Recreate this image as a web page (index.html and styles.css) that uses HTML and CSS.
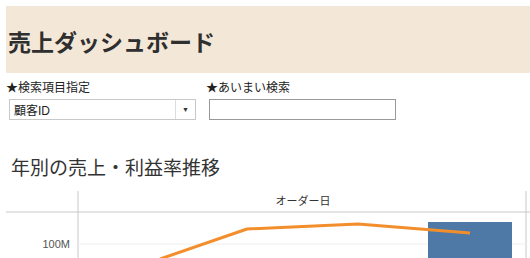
FILE: index.html
```html
<!DOCTYPE html>
<html lang="ja">
<head>
  <meta charset="UTF-8" />
  <title>売上ダッシュボード</title>
  <link rel="stylesheet" href="styles.css">
</head>
<body>
  <header class="banner">
    <h1>売上ダッシュボード</h1>
  </header>

  <div class="filters">
    <div class="filter">
      <label>★検索項目指定</label>
      <div class="select">
        <span class="select-value">顧客ID</span>
        <span class="select-arrow">▼</span>
      </div>
    </div>
    <div class="filter">
      <label>★あいまい検索</label>
      <div class="textbox"></div>
    </div>
  </div>

  <h2 class="section-title">年別の売上・利益率推移</h2>

  <div class="chart">
    <svg width="524" height="68" viewBox="0 0 524 68">
      <line x1="72" y1="0" x2="72" y2="68" stroke="#c8c8c8" />
      <line x1="520" y1="0" x2="520" y2="68" stroke="#c8c8c8" />
      <line x1="0" y1="21" x2="524" y2="21" stroke="#c8c8c8" />
      <line x1="72" y1="53" x2="520" y2="53" stroke="#efefef" />
      <text x="297" y="14" class="axis-title" text-anchor="middle">オーダー日</text>
      <text x="64" y="57" class="axis-label" text-anchor="end">100M</text>
      <rect x="422" y="31" width="84" height="40" fill="#4e79a7" />
      <polyline points="154,68 241,38 352,33 464,42" fill="none" stroke="#f28e2b" stroke-width="3" stroke-linejoin="round" />
    </svg>
  </div>
</body>
</html>
```

FILE: styles.css
```css
body {
  margin: 0;
  padding: 6px 0 0 6px;
  font-family: 'Liberation Sans', 'Noto Sans CJK JP', sans-serif;
  color: #333;
  background-color: #fff;
}
.banner {
  background-color: #f3e8d7;
  height: 67px;
  display: flex;
  align-items: center;
  padding-left: 2px;
}
.banner h1 {
  margin: 3px 0 0;
  font-size: 23px;
  font-weight: bold;
  color: #2f2f2f;
}
.filters {
  display: flex;
  gap: 10px;
  margin-top: 8px;
}
.filter {
  display: flex;
  flex-direction: column;
  width: 190px;
}
.filter label {
  font-size: 12px;
  line-height: 14px;
  color: #222;
}
.select, .textbox {
  margin: 4px 0 0 3px;
  height: 19px;
  border: 1px solid #999;
  background: #fff;
}
.select {
  border-color: #c8c8c8;
  display: flex;
  align-items: center;
  font-size: 12px;
}
.select-value {
  flex: 1;
  padding-left: 4px;
  color: #222;
}
.select-arrow {
  width: 19px;
  border-left: 1px solid #ddd;
  height: 100%;
  font-size: 7px;
  display: flex;
  align-items: center;
  justify-content: center;
  color: #333;
}
.section-title {
  margin: 37px 0 0 5px;
  font-size: 19px;
  font-weight: normal;
  color: #333;
  line-height: 24px;
}
.chart {
  margin-top: 10px;
}
.chart svg {
  display: block;
}
.axis-title {
  font-size: 11px;
  fill: #333;
}
.axis-label {
  font-size: 11px;
  fill: #555;
}
```
